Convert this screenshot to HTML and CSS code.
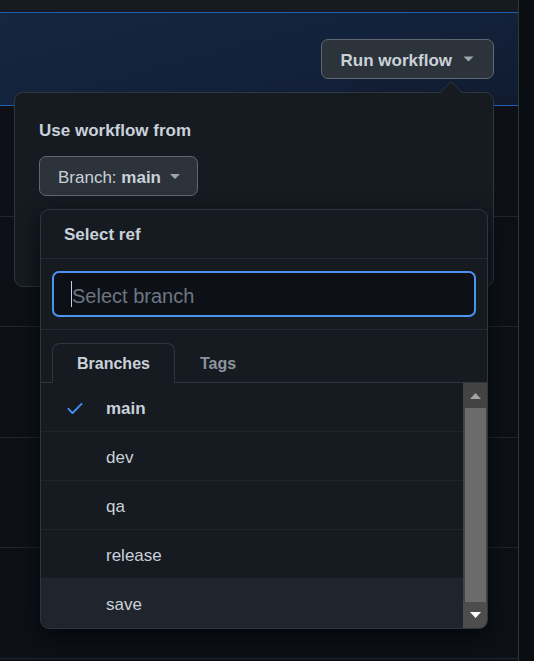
FILE: index.html
```html
<!DOCTYPE html>
<html lang="en">
<head>
<meta charset="utf-8">
<title>Run workflow</title>
<link rel="stylesheet" href="styles.css">
</head>
<body>
<div class="page">
  <div class="main">
    <div class="topbar"></div>
    <div class="banner">
      <button class="btn btn-run" type="button">
        <span>Run workflow</span>
        <svg class="caret" width="11" height="6" viewBox="0 0 11 6"><path d="M0.5 0.5h10L5.5 5.5z"/></svg>
      </button>
    </div>
    <div class="row"></div>
    <div class="row"></div>
    <div class="row"></div>
    <div class="row"></div>
    <div class="row"></div>
  </div>
  <div class="side"></div>

  <div class="popup">
    <svg class="popup-arrow" width="22" height="12" viewBox="0 0 22 12">
      <polygon points="0,12 11,1 22,12" fill="#161b22"/>
      <polyline points="0,11.5 11,0.7 22,11.5" fill="none" stroke="#30363d" stroke-width="1"/>
    </svg>
    <div class="label">Use workflow from</div>
    <button class="btn btn-branch" type="button">
      <span>Branch: <b>main</b></span>
      <svg class="caret" width="10" height="5" viewBox="0 0 10 5"><path d="M0 0h10L5 5z"/></svg>
    </button>
  </div>

  <div class="select-menu">
    <div class="menu-header">Select ref</div>
    <div class="menu-filter">
      <div class="filter-input"><span class="text-caret"></span><span class="placeholder">Select branch</span></div>
    </div>
    <div class="menu-tabs">
      <div class="tab tab-selected">Branches</div>
      <div class="tab">Tags</div>
    </div>
    <div class="menu-list">
      <div class="items">
        <div class="item item-selected">
          <svg class="check" width="20" height="20" viewBox="0 0 16 16"><path fill="#4493f8" d="M13.78 4.22a.75.75 0 0 1 0 1.06l-7.25 7.25a.75.75 0 0 1-1.06 0L2.22 9.28a.751.751 0 0 1 .018-1.042.751.751 0 0 1 1.042-.018L6 10.94l6.72-6.72a.75.75 0 0 1 1.06 0Z"/></svg>
          <span class="item-text">main</span>
        </div>
        <div class="item"><span class="check-space"></span><span class="item-text">dev</span></div>
        <div class="item"><span class="check-space"></span><span class="item-text">qa</span></div>
        <div class="item"><span class="check-space"></span><span class="item-text">release</span></div>
        <div class="item item-hover"><span class="check-space"></span><span class="item-text">save</span></div>
      </div>
      <div class="scrollbar">
        <div class="sb-btn sb-up"><svg width="11" height="6" viewBox="0 0 11 6"><path d="M0 6h11L5.5 0z" fill="#a3a3a3"/></svg></div>
        <div class="sb-track"><div class="sb-thumb"></div></div>
        <div class="sb-btn sb-down"><svg width="11" height="6" viewBox="0 0 11 6"><path d="M0 0h11L5.5 6z" fill="#ffffff"/></svg></div>
      </div>
    </div>
  </div>
</div>
</body>
</html>
```

FILE: styles.css
```css
* { box-sizing: border-box; }

body {
  margin: 0;
  background: #0d1117;
  font-family: "Liberation Sans", Arial, sans-serif;
  color: #c9d1d9;
}

.page {
  position: relative;
  width: 534px;
  height: 661px;
  display: flex;
  overflow: hidden;
}

.main {
  width: 519px;
  border-right: 1px solid #30363d;
  display: flex;
  flex-direction: column;
}

.side {
  flex: 1;
  background: #0a0d12;
}

.topbar {
  height: 12px;
  background: #161b22;
  flex: none;
}

.banner {
  height: 94px;
  flex: none;
  border-top: 1px solid #1f5fb0;
  border-bottom: 1px solid #1f5fb0;
  background: linear-gradient(165deg, #16263f 0%, #13223b 50%, #101b2f 100%);
  display: flex;
  justify-content: flex-end;
  align-items: flex-start;
  padding: 26px 24px 0 0;
}

.row {
  height: 110.5px;
  flex: none;
  border-bottom: 1px solid #21262d;
}

.btn {
  height: 40px;
  display: inline-flex;
  align-items: center;
  border: 1px solid #5f6771;
  border-radius: 7px;
  background: #2d333b;
  color: #c9d1d9;
  font-family: "Liberation Sans", Arial, sans-serif;
  font-size: 17px;
  line-height: 1;
  cursor: pointer;
}

.btn > span { padding-top: 2px; }

.btn-run {
  font-weight: 700;
  padding: 0 19px 0 19px;
  gap: 11px;
}

.btn-branch {
  font-weight: 400;
  padding: 0 17px 0 18px;
  gap: 9px;
}

.btn-branch b { font-weight: 700; }

.caret path { fill: #9da5ae; }

.popup {
  position: absolute;
  left: 14px;
  top: 92px;
  width: 480px;
  height: 195px;
  background: #161b22;
  border: 1px solid #30363d;
  border-radius: 9px;
  padding: 26px 24px 0 24px;
}

.popup-arrow {
  position: absolute;
  left: 425px;
  top: -12px;
  display: block;
}

.label {
  font-size: 17px;
  font-weight: 700;
  line-height: 24px;
  margin-bottom: 13px;
}

.select-menu {
  position: absolute;
  left: 40px;
  top: 209px;
  width: 448px;
  height: 420px;
  background: #161b22;
  border: 1px solid #30363d;
  border-radius: 9px;
  overflow: hidden;
  display: flex;
  flex-direction: column;
  box-shadow: 0 8px 24px rgba(1, 4, 9, 0.75);
}

.menu-header {
  height: 49px;
  flex: none;
  border-bottom: 1px solid #262b33;
  display: flex;
  align-items: center;
  padding: 1px 0 0 23px;
  font-size: 17px;
  font-weight: 700;
}

.menu-filter {
  flex: none;
  padding: 12px 11px;
  border-bottom: 1px solid #262b33;
}

.filter-input {
  height: 46px;
  border: 2px solid #4a94ec;
  border-radius: 7px;
  background: #0d1117;
  display: flex;
  align-items: center;
  padding-left: 17px;
  font-size: 20px;
}

.text-caret {
  width: 1px;
  height: 26px;
  background: #c9d1d9;
  flex: none;
}

.placeholder {
  color: #6e7681;
  line-height: 1;
  padding-top: 3px;
}

.menu-tabs {
  flex: none;
  display: flex;
  padding: 13px 11px 0;
  border-bottom: 1px solid #30363d;
}

.tab {
  height: 40px;
  margin-bottom: -1px;
  padding: 1px 24px 0;
  display: flex;
  align-items: center;
  font-size: 16px;
  font-weight: 700;
  color: #8b949e;
  border: 1px solid transparent;
  border-bottom: 0;
  border-radius: 8px 8px 0 0;
}

.tab-selected {
  color: #c9d1d9;
  background: #161b22;
  border-color: #30363d;
}

.menu-list {
  flex: 1;
  display: flex;
  min-height: 0;
}

.items {
  flex: 1;
  display: flex;
  flex-direction: column;
}

.item {
  height: 49px;
  flex: none;
  display: flex;
  align-items: center;
  padding-left: 24px;
  gap: 21px;
  font-size: 17px;
  border-bottom: 1px solid #21262d;
}

.item-text { padding-top: 3px; }

.item:last-child { border-bottom: 0; }

.item-selected { font-weight: 700; }

.item-hover { background: #20252d; }

.check, .check-space {
  width: 20px;
  height: 20px;
  flex: none;
  display: block;
}

.check { margin-top: 2px; }

.scrollbar {
  width: 24px;
  flex: none;
  display: flex;
  flex-direction: column;
  background: #434343;
}

.sb-btn {
  display: flex;
  align-items: center;
  justify-content: center;
  flex: none;
}

.sb-btn svg { display: block; }

.sb-up { height: 25px; }

.sb-down {
  height: 26px;
  background: #4d4d4d;
}

.sb-track {
  flex: 1;
  display: flex;
  padding: 0 1px 0 2px;
}

.sb-thumb {
  flex: 1;
  background: #6b6b6b;
}
```
